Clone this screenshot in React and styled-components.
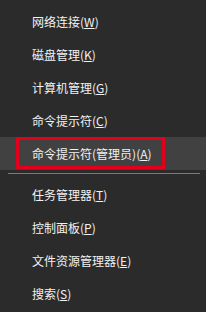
import React from "react";
import styled, { createGlobalStyle } from "styled-components";

const Global = createGlobalStyle`
  html, body { margin: 0; padding: 0; background: #2b2b2b; }
  body { font-family: "Microsoft YaHei", "Noto Sans CJK SC", "Noto Sans", sans-serif; }
`;

const Menu = styled.div`
  width: 206px;
  height: 312px;
  background: #2b2b2b;
  padding-top: 5px;
  box-sizing: border-box;
  overflow: hidden;
`;

const Row = styled.div`
  position: relative;
  height: 33px;
  display: flex;
  align-items: center;
  padding-left: 32px;
  color: #f2f2f2;
  font-size: 12px;
  background: ${(p) => (p.$active ? "#414141" : "transparent")};
`;

const Outline = styled.div`
  position: absolute;
  left: 16px;
  width: 149px;
  top: 0;
  bottom: 1px;
  border: 3px solid #e3001b;
  box-sizing: border-box;
`;

const Key = styled.span`
  text-decoration: underline;
  text-underline-offset: 1px;
`;

const Separator = styled.div`
  height: 1px;
  margin: 3px 6px 4px 8px;
  background: #7a7a7a;
`;

const Item = ({ label, k, active }) => (
  <Row $active={active}>
    {active && <Outline />}
    <span>
      {label}(<Key>{k}</Key>)
    </span>
  </Row>
);

export default function App() {
  return (
    <>
      <Global />
      <Menu>
        <Item label="网络连接" k="W" />
        <Item label="磁盘管理" k="K" />
        <Item label="计算机管理" k="G" />
        <Item label="命令提示符" k="C" />
        <Item label="命令提示符(管理员)" k="A" active />
        <Separator />
        <Item label="任务管理器" k="T" />
        <Item label="控制面板" k="P" />
        <Item label="文件资源管理器" k="E" />
        <Item label="搜索" k="S" />
      </Menu>
    </>
  );
}
